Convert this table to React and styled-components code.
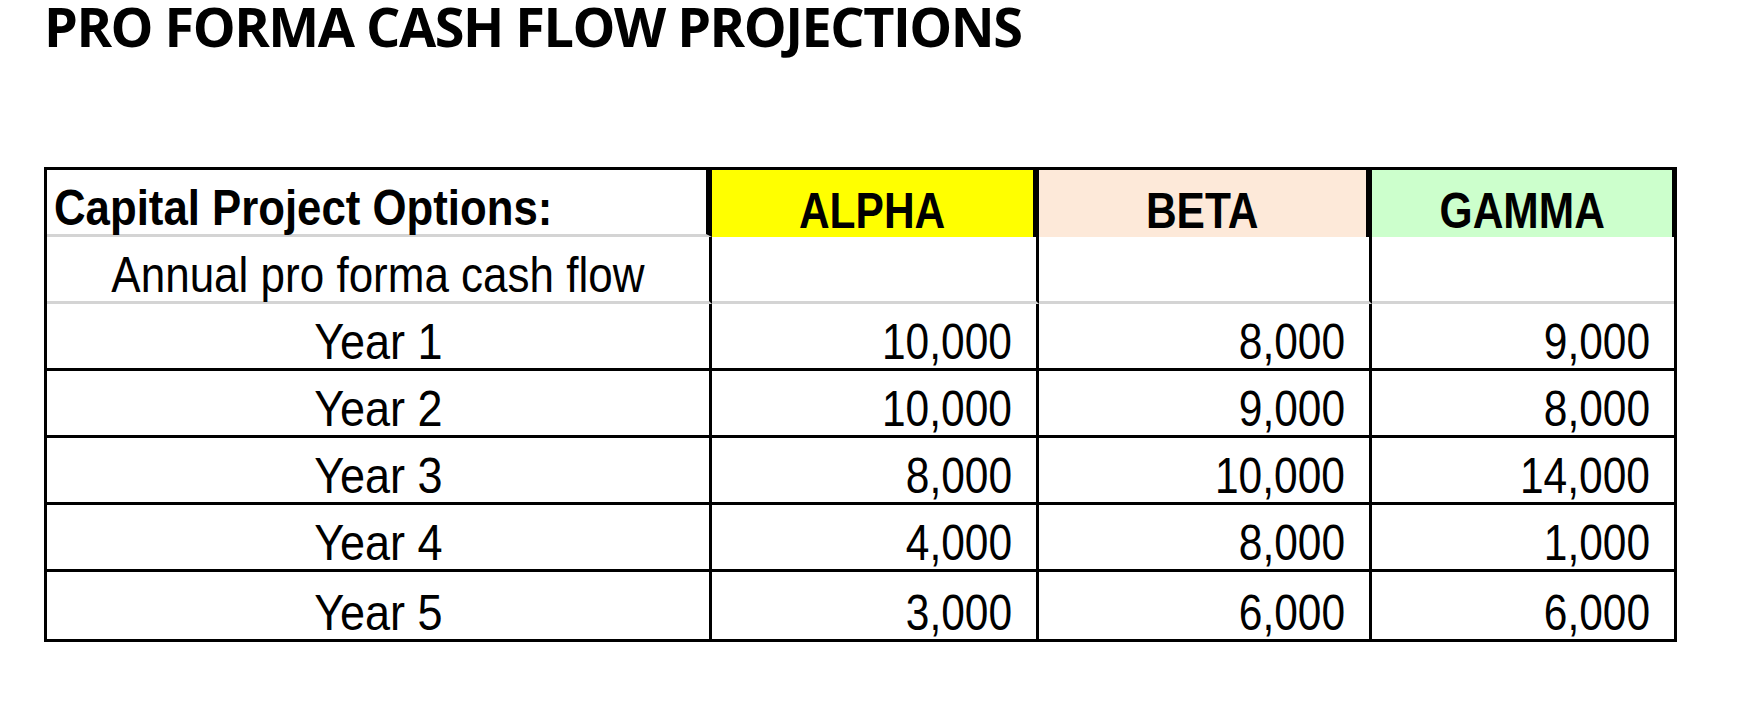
import React from 'react';
import styled, { createGlobalStyle } from 'styled-components';

const GlobalStyle = createGlobalStyle`
  html, body {
    margin: 0;
    padding: 0;
    background: #ffffff;
  }
`;

const Page = styled.div`
  width: 1754px;
  height: 722px;
  background: #fff;
  padding: 0 0 0 44px;
  box-sizing: border-box;
`;

const Title = styled.h1`
  margin: 0;
  height: 167px;
  font-family: "Open Sans", "Liberation Sans", sans-serif;
  font-weight: 700;
  font-size: 54px;
  line-height: 52px;
  letter-spacing: -1.5px;
  color: #000;
`;

const Sheet = styled.div`
  display: grid;
  grid-template-columns: 665px 327px 333px 302px;
  grid-auto-rows: 67px;
  width: 1633px;
  box-sizing: border-box;
  border: 3px solid #000;
  font-family: "Liberation Sans Narrow", "Arial Narrow", "Liberation Sans", sans-serif;
  font-size: 50px;
  color: #000;
`;

const Cell = styled.div`
  display: flex;
  align-items: flex-end;
  justify-content: ${p => p.align === 'right' ? 'flex-end' : p.align === 'left' ? 'flex-start' : 'center'};
  box-sizing: border-box;
  padding: 0 ${p => p.align === 'right' ? '24px' : '0'} 1px ${p => p.align === 'left' ? '7px' : '0'};
  line-height: 1;
  white-space: nowrap;
  background: ${p => p.bg || '#fff'};
  font-weight: ${p => p.bold ? 700 : 400};
  border-right: ${p => p.last ? 0 : 3}px solid #000;
  border-bottom: ${p => p.line ? `3px solid ${p.line}` : '0'};
`;

const HeadCell = styled(Cell)`
  border-right-width: ${p => p.last ? 2 : 6}px;
`;

// Arial Narrow is not installed, so Liberation Sans is squeezed to its width
const Narrow = styled.span`
  display: inline-block;
  transform: scaleX(${p => p.squeeze || 0.86});
  transform-origin: ${p => p.align === 'right' ? 'right' : p.align === 'left' ? 'left' : 'center'} bottom;
`;

const rows = [
  ['Year 1', '10,000', '8,000', '9,000'],
  ['Year 2', '10,000', '9,000', '8,000'],
  ['Year 3', '8,000', '10,000', '14,000'],
  ['Year 4', '4,000', '8,000', '1,000'],
  ['Year 5', '3,000', '6,000', '6,000'],
];

const options = [
  { name: 'ALPHA', color: '#ffff00' },
  { name: 'BETA', color: '#fde9d9' },
  { name: 'GAMMA', color: '#ccffcc' },
];

export default function App() {
  return (
    <Page>
      <GlobalStyle />
      <Title>PRO FORMA CASH FLOW PROJECTIONS</Title>
      <Sheet>
        <HeadCell align="left" bold line="#d4d4d4">
          <Narrow align="left" squeeze={0.875}>Capital Project Options:</Narrow>
        </HeadCell>
        {options.map((o, i) => (
          <HeadCell key={o.name} bold bg={o.color} last={i === options.length - 1}>
            <Narrow squeeze={0.85}>{o.name}</Narrow>
          </HeadCell>
        ))}

        <Cell line="#d4d4d4">
          <Narrow squeeze={0.88}>Annual pro forma cash flow</Narrow>
        </Cell>
        {options.map((o, i) => (
          <Cell key={o.name} line="#d4d4d4" last={i === options.length - 1} />
        ))}

        {rows.map((r, ri) => (
          <React.Fragment key={r[0]}>
            {r.map((v, ci) => {
              const align = ci === 0 ? 'center' : 'right';
              return (
                <Cell
                  key={ci}
                  align={align}
                  line={ri < rows.length - 1 ? '#000' : null}
                  last={ci === r.length - 1}
                >
                  <Narrow align={align} squeeze={ci === 0 ? 0.9 : 0.85}>{v}</Narrow>
                </Cell>
              );
            })}
          </React.Fragment>
        ))}
      </Sheet>
    </Page>
  );
}
